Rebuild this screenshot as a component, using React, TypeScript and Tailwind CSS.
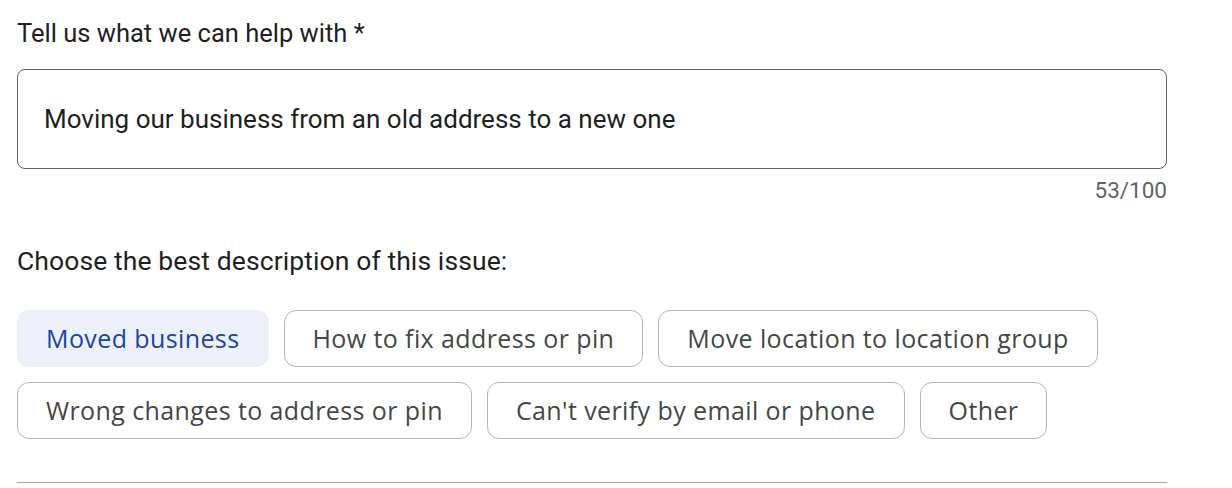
import React from "react";

const chipsRow1 = ["Moved business", "How to fix address or pin", "Move location to location group"];
const chipsRow2 = ["Wrong changes to address or pin", "Can't verify by email or phone", "Other"];

function Chip({ label, selected }: { label: string; selected?: boolean }) {
  return (
    <button
      className={
        selected
          ? "h-[57px] rounded-[12px] border border-[#edf0f8] bg-[#edf0f8] px-[28px] text-[25px] font-medium text-[#1a46a2] [font-family:'Open_Sans',sans-serif] tracking-[0.4px]"
          : "h-[57px] rounded-[12px] border border-[#b5b5b5] bg-white px-[28px] text-[25px] font-medium text-[#444746] [font-family:'Open_Sans',sans-serif] tracking-[0.4px]"
      }
    >
      {label}
    </button>
  );
}

export default function App() {
  return (
    <div className="w-[1232px] h-[488px] bg-white [font-family:Roboto,sans-serif] text-[#1f1f1f] overflow-hidden">
      <div className="ml-[17px] w-[1150px] pt-[17px]">
        <div className="text-[25.5px] leading-[32px]">Tell us what we can help with *</div>
        <div className="mt-[20px] h-[100px] rounded-[8px] border border-[#5f6368] flex items-center px-[26px]">
          <span className="text-[26px] text-[#1f1f1f]">Moving our business from an old address to a new one</span>
        </div>
        <div className="mt-[7px] text-right text-[22.5px] leading-[28px] text-[#5f6368]">53/100</div>
        <div className="mt-[41px] text-[26.5px] leading-[32px] tracking-[0.1px]">Choose the best description of this issue:</div>
        <div className="mt-[33px] flex flex-col gap-[15px]">
          <div className="flex gap-[15px]">
            {chipsRow1.map((c, i) => (
              <Chip key={c} label={c} selected={i === 0} />
            ))}
          </div>
          <div className="flex gap-[15px]">
            {chipsRow2.map((c) => (
              <Chip key={c} label={c} />
            ))}
          </div>
        </div>
        <div className="mt-[43px] h-px bg-[#ababab]" />
      </div>
    </div>
  );
}
